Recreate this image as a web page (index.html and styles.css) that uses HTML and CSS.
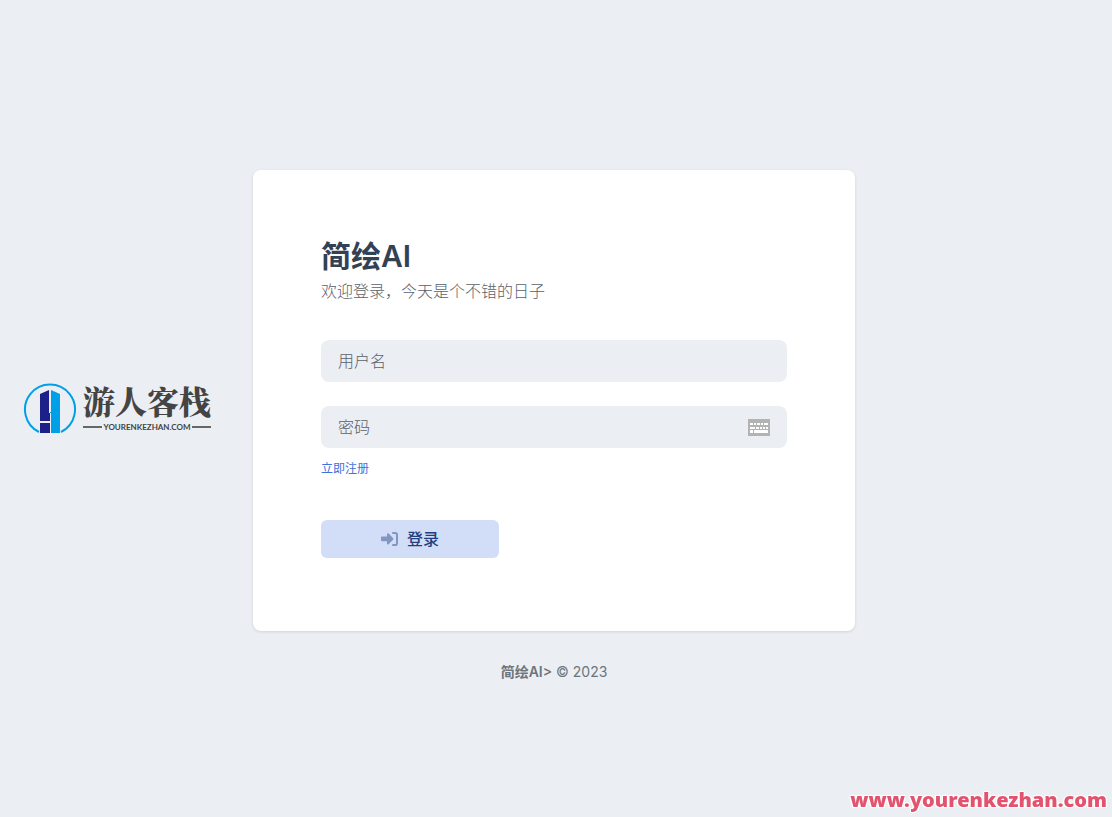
FILE: index.html
```
<!DOCTYPE html>
<html lang="zh-CN">
<head>
  <meta charset="UTF-8">
  <meta name="viewport" content="width=device-width, initial-scale=1.0">
  <title>简绘AI</title>
  <link rel="stylesheet" href="styles.css">
</head>
<body>
  <main class="page">
    <section class="login-card">
      <h1>简绘AI</h1>
      <p class="welcome">欢迎登录，今天是个不错的日子</p>
      <form class="login-form">
        <input type="text" id="username" name="username" class="form-control" placeholder="用户名" aria-label="用户名">
        <div class="form-control password-group">
          <input type="password" id="password" name="password" placeholder="密码" aria-label="密码">
          <svg class="keyboard" width="22" height="17" viewBox="0 0 22 17" aria-hidden="true">
            <path fill="#b3b3b3" d="M0 0h22v17H0z"/>
            <path fill="#fff" d="M2 4h3v2H2zM6 4h2v2H6zM9 4h3v2H9zM13 4h2v2h-2zM16 4h4v2h-4zM2 8h5v2H2zM8 8h3v2H8zM12 8h2v2h-2zM15 8h2v2h-2zM18 8h2v2h-2zM2 11h3v3H2zM6 11h14v3H6z"/>
          </svg>
        </div>
        <a class="register" href="#">立即注册</a>
        <button type="button" class="btn-login">
          <svg width="18" height="16" viewBox="0 0 18 16" aria-hidden="true">
            <path fill="#8296c3" d="M1 5.500h5V3.200c0-.9 1-1.200 1.600-.7l4.400 4.500c.5.500.5 1.300 0 1.800l-4.400 4.500c-.6.600-1.600.2-1.600-.7v-2.300H1c-.6 0-1-.4-1-1V6.500c0-.6.4-1 1-1z"/>
            <path fill="none" stroke="#8296c3" stroke-width="2" stroke-linecap="round" d="M12 2h2.200c1 0 1.800.8 1.800 1.800v8.400c0 1-.8 1.800-1.800 1.800H12"/>
          </svg>
          <span>登录</span>
        </button>
      </form>
    </section>
    <footer class="copyright"><strong>简绘AI&gt;</strong> © 2023</footer>
  </main>

  <div class="brand">
    <svg width="54" height="54" viewBox="0 0 54 54" aria-hidden="true">
      <path fill="none" stroke="#00a0e9" stroke-width="2" d="M16 50A25 25 0 1 1 38 50"/>
      <path fill="#1d2088" d="M17 12l9-4v23h1v8H17zM17 41h10v10H17z"/>
      <path fill="#00a0e9" d="M28 8l9 4v39h-9V31h-1v-1h1z"/>
    </svg>
    <div class="brand-text">
      <span class="brand-name">游人客栈</span>
      <span class="brand-site">YOURENKEZHAN.COM</span>
    </div>
  </div>
  <div class="site-mark">www.yourenkezhan.com</div>
</body>
</html>
```
FILE: styles.css
```
* {
  box-sizing: border-box;
}

body {
  margin: 0;
  background: #ebeef2;
  color: #6c757d;
  font-family: Inter, "Noto Sans CJK SC", sans-serif;
  font-size: 16px;
  line-height: 24px;
}

.page {
  min-height: 100vh;
  padding: 34px 4px 0 0;
  display: flex;
  flex-direction: column;
  align-items: center;
  justify-content: center;
}

.login-card {
  width: 100%;
  max-width: 602px;
  padding: 67px 68px 73px;
  background: #fff;
  border-radius: 8px;
  box-shadow: 0 1px 3px rgba(52, 64, 84, 0.14);
}

h1 {
  margin: 0 0 4px;
  color: #334155;
  font-size: 30px;
  font-weight: 600;
  line-height: 38px;
}

.welcome {
  margin: 0 0 37px;
  color: #58616a;
  font-weight: 300;
}

.login-form {
  display: flex;
  flex-direction: column;
}

.form-control {
  width: 100%;
  height: 42px;
  margin-bottom: 24px;
  padding: 0 17px;
  border: 0;
  border-radius: 8px;
  background: #ebeef2;
  font: inherit;
}

.password-group {
  display: flex;
  align-items: center;
  margin-bottom: 12px;
}

.password-group input {
  flex: 1;
  min-width: 0;
  padding: 0;
  border: 0;
  background: none;
  font: inherit;
}

input::placeholder {
  color: #58616a;
  font-weight: 300;
  opacity: 1;
}

.keyboard {
  margin-top: 2px;
}

.register {
  align-self: flex-start;
  margin-bottom: 42px;
  color: #4170dd;
  font-size: 12px;
  line-height: 18px;
  text-decoration: none;
}

.btn-login {
  width: 178px;
  height: 38px;
  padding: 0;
  display: flex;
  align-items: center;
  justify-content: center;
  gap: 8px;
  border: 0;
  border-radius: 6px;
  background: #d2ddf7;
  color: #21407f;
  font: inherit;
  font-weight: 500;
  cursor: pointer;
}

.copyright {
  margin-top: 31px;
  font-size: 14px;
  line-height: 20px;
}

.copyright strong {
  font-weight: 600;
}

/* 左侧品牌标识 */
.brand {
  position: absolute;
  top: 382px;
  left: 23px;
  display: flex;
  gap: 6px;
  color: #444;
}

.brand-text {
  width: 128px;
}

.brand-name {
  display: block;
  font-family: "Noto Serif CJK SC", "Noto Sans CJK SC", serif;
  font-size: 32px;
  font-weight: 900;
  line-height: 36px;
}

.brand-site {
  display: flex;
  align-items: center;
  gap: 2px;
  margin-top: 4px;
  font-family: Lato, sans-serif;
  font-size: 8px;
  font-weight: 700;
  line-height: 10px;
}

.brand-site::before,
.brand-site::after {
  content: "";
  flex: 1;
  height: 2px;
  background: #666;
}

/* 右下角网址 */
.site-mark {
  position: fixed;
  right: 5px;
  bottom: 3px;
  color: #e2536f;
  font-family: "Noto Sans", sans-serif;
  font-size: 20px;
  font-weight: 900;
  line-height: 28px;
  text-shadow: 1px 1px 1px #fff, -1px -1px 1px #fff, 1px -1px 1px #fff, -1px 1px 1px #fff;
}
```
